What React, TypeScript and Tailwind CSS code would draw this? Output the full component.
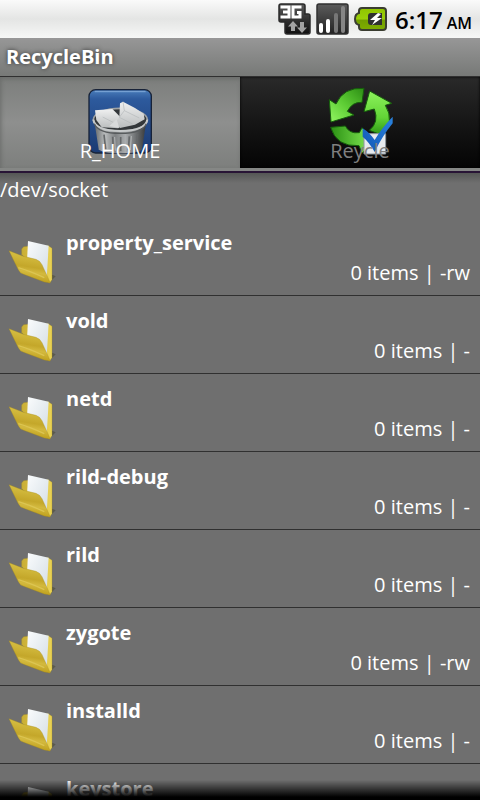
import { FC, useState } from "react";

interface Entry {
  name: string;
  info?: string;
}

const entries: Entry[] = [
  { name: "property_service", info: "0 items | -rw" },
  { name: "vold", info: "0 items | -" },
  { name: "netd", info: "0 items | -" },
  { name: "rild-debug", info: "0 items | -" },
  { name: "rild", info: "0 items | -" },
  { name: "zygote", info: "0 items | -rw" },
  { name: "installd", info: "0 items | -" },
  { name: "keystore" },
];

const NetworkIcon: FC = () => (
  <svg width="33" height="32" viewBox="0 0 33 32" aria-hidden="true">
    <defs>
      <linearGradient id="networkBg" x1="0" y1="0" x2="0" y2="1">
        <stop offset="0" stopColor="#5a5a5a" />
        <stop offset="0.6" stopColor="#2c2c2c" />
        <stop offset="1" stopColor="#101010" />
      </linearGradient>
    </defs>
    <path d="M3 1h22q2 0 2 2v8h3q2 0 2 2v16q0 2-2 2H9q-2 0-2-2V19H3q-2 0-2-2V3q0-2 2-2z" fill="url(#networkBg)" stroke="#2a2a2a" strokeWidth="1.5" />
    <path d="M2.500 4H11v10H2.500M5 9h6M23.500 4H15v10h7V9.500h-3" fill="none" stroke="#fff" strokeWidth="3" />
    <path d="M15 18l5 5.500h-3V28h-4v-4.500h-3zM24 30l-5-5.500h3V19h4v5.500h3z" fill="#a2a2a2" />
  </svg>
);

const SignalIcon: FC = () => (
  <svg width="33" height="32" viewBox="0 0 33 32" aria-hidden="true">
    <defs>
      <linearGradient id="signalBg" x1="0" y1="0" x2="0" y2="1">
        <stop offset="0" stopColor="#5c5c5c" />
        <stop offset="1" stopColor="#222" />
      </linearGradient>
    </defs>
    <rect x="1" y="1" width="31" height="30" rx="2" fill="url(#signalBg)" stroke="#303030" strokeWidth="1.5" />
    <rect x="3" y="20" width="4" height="10" rx="2" fill="#fff" />
    <rect x="10" y="16" width="4" height="14" rx="2" fill="#fff" />
    <rect x="18" y="10" width="4" height="20" rx="2" fill="#777" />
    <rect x="25" y="3" width="4" height="27" rx="2" fill="#858585" />
  </svg>
);

const BatteryIcon: FC = () => (
  <svg width="33" height="24" viewBox="0 0 33 24" aria-hidden="true">
    <defs>
      <linearGradient id="batteryFill" x1="0" y1="0" x2="0" y2="1">
        <stop offset="0" stopColor="#8fc400" />
        <stop offset="0.5" stopColor="#9bcf08" />
        <stop offset="0.55" stopColor="#739f00" />
        <stop offset="1" stopColor="#7fae00" />
      </linearGradient>
    </defs>
    <path d="M8 1h21q3 0 3 3v16q0 3-3 3H8q-3 0-3-3v-2q-4-1-4-6t4-6V4q0-3 3-3z" fill="url(#batteryFill)" stroke="#3a3d30" strokeWidth="2" />
    <path d="M17 6h11v12H17q-3 0-3-3V9q0-3 3-3z" fill="#303030" />
    <path d="M24 6l-8 7h5l-3 5 10-7h-5l4-4z" fill="#fff" />
  </svg>
);

const TrashIcon: FC = () => (
  <svg width="66" height="68" viewBox="51 33 198 204" aria-hidden="true">
    <defs>
      <linearGradient id="trashBg" x1="0" y1="0" x2="0" y2="1">
        <stop offset="0" stopColor="#4a7dbb" />
        <stop offset="0.15" stopColor="#2d5a9d" />
        <stop offset="1" stopColor="#1b3a72" />
      </linearGradient>
      <linearGradient id="trashCan" x1="0" y1="0" x2="1" y2="0">
        <stop offset="0" stopColor="#66696b" />
        <stop offset="0.2" stopColor="#b9bcbd" />
        <stop offset="0.4" stopColor="#7f8284" />
        <stop offset="0.6" stopColor="#a9acae" />
        <stop offset="0.8" stopColor="#6d7072" />
        <stop offset="1" stopColor="#37393b" />
      </linearGradient>
      <linearGradient id="trashPaper" x1="0" y1="0" x2="0" y2="1">
        <stop offset="0" stopColor="#f0f1f1" />
        <stop offset="1" stopColor="#babdbe" />
      </linearGradient>
    </defs>
    <rect x="57" y="41" width="187" height="190" rx="20" fill="url(#trashBg)" stroke="#182338" strokeWidth="4" />
    <path d="M74 47h153" stroke="#7fa9d8" strokeWidth="3" />
    <path d="M74 142l12 78q10 12 66 12t64-12l12-78z" fill="url(#trashCan)" />
    <path d="M102 176l5 44M128 182l2 42M152 183v42M178 181l-3 42M203 174l-6 44" stroke="#66696b" strokeWidth="5" />
    <path d="M108 177l5 43M134 183l2 41M184 180l-3 42" stroke="#b4b7b8" strokeWidth="3" />
    <ellipse cx="151" cy="131" rx="81" ry="34" fill="#33373a" stroke="#9fa3a5" strokeWidth="5" />
    <path d="M75 103l52-4 10 10 16 16-8 32-50-3-16-22z" fill="url(#trashPaper)" />
    <path d="M150 82l9-5 36 19 26 17 3 17-29 16-45 10-15-16 13-16z" fill="url(#trashPaper)" />
    <path d="M98 123l47 24M159 77l4 27M163 104l-15 20 40 20M163 104l45 22" fill="none" stroke="#b4b8ba" strokeWidth="2" />
    <path d="M118 150l22-20 8 26z" fill="#d8dadb" />
    <path d="M70 131q6 34 81 34t81-34" fill="none" stroke="#c6c9ca" strokeWidth="6" />
    <path d="M73 143q12 29 78 29t78-29" fill="none" stroke="#575b5d" strokeWidth="4" />
  </svg>
);

const RecycleIcon: FC = () => (
  <svg width="68" height="70" viewBox="18 33 204 210" aria-hidden="true">
    <defs>
      <linearGradient id="arrowLeft" x1="1" y1="0" x2="0" y2="1">
        <stop offset="0" stopColor="#2c8d14" />
        <stop offset="0.5" stopColor="#5ccb33" />
        <stop offset="1" stopColor="#93f763" />
      </linearGradient>
      <linearGradient id="arrowRight" x1="0" y1="0" x2="0" y2="1">
        <stop offset="0" stopColor="#8df25c" />
        <stop offset="0.6" stopColor="#62d436" />
        <stop offset="1" stopColor="#2d9415" />
      </linearGradient>
      <linearGradient id="arrowBottom" x1="0" y1="0" x2="1" y2="0">
        <stop offset="0" stopColor="#2b9014" />
        <stop offset="1" stopColor="#86ee56" />
      </linearGradient>
      <linearGradient id="tickFill" x1="1" y1="0" x2="0" y2="1">
        <stop offset="0" stopColor="#2a83de" />
        <stop offset="1" stopColor="#1056b5" />
      </linearGradient>
    </defs>
    <g stroke="#155e0b" strokeWidth="3">
      <path d="M132 37L126 79Q97 77 82 106L102 117 33 138 28 71 48 84Q70 33 132 37z" fill="url(#arrowLeft)" />
      <path d="M149 45L215 82 196 88Q225 135 187 178L148 163Q178 139 163 99L132 107z" fill="url(#arrowRight)" />
      <path d="M32 154L76 150Q88 174 118 170L126 155 160 195 126 232 117 209Q49 213 32 154z" fill="url(#arrowBottom)" />
    </g>
    <path d="M132 173h65v61h-65z" fill="#e6eaee" stroke="#8d959c" strokeWidth="3" />
    <path d="M128 157Q149 170 164 192 184 157 218 122V142Q187 180 164 228 148 199 128 182z" fill="url(#tickFill)" />
  </svg>
);

const FolderIcon: FC = () => (
  <svg width="48" height="45" viewBox="9 15 144 135" aria-hidden="true">
    <defs>
      <linearGradient id="folderBack" x1="0" y1="0" x2="1" y2="0">
        <stop offset="0" stopColor="#c9ae35" />
        <stop offset="1" stopColor="#ead355" />
      </linearGradient>
      <linearGradient id="folderFront" x1="0.6" y1="0" x2="0.4" y2="1">
        <stop offset="0" stopColor="#dcc64a" />
        <stop offset="0.5" stopColor="#c4a72a" />
        <stop offset="0.65" stopColor="#d3b93e" />
        <stop offset="1" stopColor="#b8970f" />
      </linearGradient>
      <linearGradient id="folderPaper" x1="0" y1="0" x2="1" y2="1">
        <stop offset="0" stopColor="#fafcfd" />
        <stop offset="1" stopColor="#d3dde4" />
      </linearGradient>
    </defs>
    <path d="M138 118l14 6-14 14z" fill="#59594f" />
    <path d="M50 58V42l6-7 14-1 60-2 11 8v94l-7 10-30-20z" fill="url(#folderBack)" stroke="#a58e22" strokeWidth="1" />
    <path d="M69 18l62 14-6 98-59-50z" fill="url(#folderPaper)" />
    <path d="M12 47l43 17 38 9q12 4 18 16l25 55-18-3-62-23q-12-4-16-14L24 72z" fill="url(#folderFront)" stroke="#a48a1c" strokeWidth="1" />
    <path d="M40 98q34 10 78 30" stroke="#dcc552" strokeWidth="4" fill="none" />
  </svg>
);

const StatusBar: FC = () => (
  <div className="flex h-[38px] shrink-0 items-center justify-end bg-linear-to-b from-[#fafafa] via-[#e4e5e4] to-[#f6f7f6] pr-2 text-black">
    <div className="mr-2 flex items-center gap-[5px]">
      <NetworkIcon />
      <SignalIcon />
      <BatteryIcon />
    </div>
    <span className="flex items-baseline gap-1 pt-0.5 font-semibold">
      <span className="text-[24px]">6:17</span>
      <span className="text-[16px]">AM</span>
    </span>
  </div>
);

const tabs = [
  { label: "R_HOME", Icon: TrashIcon },
  { label: "Reycle", Icon: RecycleIcon },
];

export default function App() {
  const [active, setActive] = useState(0);

  return (
    <div className="flex h-screen flex-col overflow-hidden bg-[#6f6f6f] font-['Open_Sans','Noto_Sans',sans-serif] text-white">
      <StatusBar />

      <header className="flex h-[39px] shrink-0 items-center border-b border-[#303030] bg-linear-to-b from-[#979797] to-[#777977] px-1.5">
        <h1 className="text-[20px] font-bold [text-shadow:0_0_4px_#333]">RecycleBin</h1>
      </header>

      <nav className="flex h-[91px] shrink-0" role="tablist">
        {tabs.map(({ label, Icon }, i) => (
          <button
            key={label}
            role="tab"
            aria-selected={i === active}
            onClick={() => setActive(i)}
            className={`relative flex flex-1 justify-center pt-2.5 ${
              i === active
                ? "bg-linear-to-b from-[#7c7e7c] via-[#8e8f8e] to-[#7d7f7d] text-white shadow-[inset_1px_2px_4px_#6a6c6a]"
                : "bg-linear-to-b from-[#2a2a2a] to-[#050505] text-[#808080] shadow-[inset_0_0_3px_#000]"
            }`}
          >
            <Icon />
            <span className="absolute inset-x-0 bottom-[5px] text-center text-[20px] leading-6">{label}</span>
          </button>
        ))}
      </nav>
      <div className="h-[5px] shrink-0 border-b-2 border-[#281535] bg-[#858785]" />

      <main className="relative flex min-h-0 flex-1 flex-col bg-linear-to-b from-[#555755] to-[#6f6f6f] to-[10px]">
        <p className="h-[45px] shrink-0 pt-[5px] text-[20px] leading-6">/dev/socket</p>
        <ul className="min-h-0 flex-1 overflow-hidden">
          {entries.map((entry) => (
            <li key={entry.name} className="flex h-[78px] gap-2 border-b border-[#303030] pl-2 pr-2.5">
              <div className="flex w-[50px] shrink-0 items-start pt-[22px]">
                <FolderIcon />
              </div>
              <div className="flex flex-1 flex-col pt-2.5 text-[20px] leading-[30px]">
                <span className="font-bold">{entry.name}</span>
                {entry.info && <span className="text-right">{entry.info}</span>}
              </div>
            </li>
          ))}
        </ul>
        <div className="pointer-events-none absolute inset-x-0 bottom-0 h-5 bg-linear-to-b from-transparent to-black to-85%" />
      </main>
    </div>
  );
}
